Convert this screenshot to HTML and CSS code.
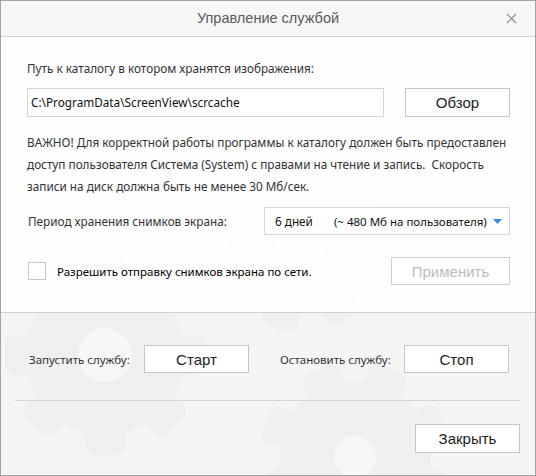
FILE: index.html
```html
<!DOCTYPE html>
<html lang="ru">
<head>
<meta charset="utf-8">
<title>Управление службой</title>
<link rel="stylesheet" href="styles.css">
</head>
<body>
<div class="window">
  <div class="titlebar">
    <span class="title">Управление службой</span>
    <span class="close" aria-label="Закрыть">
      <svg width="11" height="11" viewBox="0 0 11 11"><path d="M1 1L10 10M10 1L1 10" stroke="#8a8a8a" stroke-width="1.2" fill="none"/></svg>
    </span>
  </div>
  <div class="body">
    <svg class="gears" width="534" height="438" viewBox="0 0 534 438" aria-hidden="true">
      <defs>
        <g id="gear">
          <circle r="80"/>
          <rect x="-20" y="-100" width="40" height="200" rx="9"/>
          <rect x="-20" y="-100" width="40" height="200" rx="9" transform="rotate(45)"/>
          <rect x="-20" y="-100" width="40" height="200" rx="9" transform="rotate(90)"/>
          <rect x="-20" y="-100" width="40" height="200" rx="9" transform="rotate(135)"/>
        </g>
      </defs>
      <g class="gear-fill">
        <use href="#gear" transform="translate(104 318)"/>
        <use href="#gear" transform="translate(354 420) rotate(22) scale(0.95)"/>
        <use href="#gear" transform="translate(300 205) rotate(15) scale(0.9)"/>
      </g>
      <g class="gear-hole">
        <circle cx="104" cy="318" r="27"/>
        <circle cx="354" cy="420" r="21"/>
        <circle cx="300" cy="205" r="25"/>
      </g>
    </svg>
    <section class="upper">
      <div class="label">Путь к каталогу в котором хранятся изображения:</div>
      <div class="path-row">
        <div class="input">C:\ProgramData\ScreenView\scrcache</div>
        <button class="btn btn-browse">Обзор</button>
      </div>
      <p class="note">ВАЖНО! Для корректной работы программы к каталогу должен быть предоставлен доступ пользователя Система (System) с правами на чтение и запись.&nbsp; Скорость записи на диск должна быть не менее 30 Мб/сек.</p>
      <div class="period-row">
        <span class="period-label">Период хранения снимков экрана:</span>
        <div class="select">
          <span class="sel-days">6 дней</span>
          <span class="sel-size">(~ 480 Мб на пользователя)</span>
          <svg class="sel-arrow" width="9" height="5" viewBox="0 0 9 5"><path d="M0 0H9L4.5 5Z" fill="#2f8fdc"/></svg>
        </div>
      </div>
      <div class="check-row">
        <span class="checkbox"></span>
        <span class="check-label">Разрешить отправку снимков экрана по сети.</span>
        <button class="btn btn-apply" disabled>Применить</button>
      </div>
    </section>
    <section class="lower">
      <div class="service-row">
        <span class="svc-label">Запустить службу:</span>
        <button class="btn btn-svc">Старт</button>
        <span class="svc-label svc-stop">Остановить службу:</span>
        <button class="btn btn-svc">Стоп</button>
      </div>
      <div class="divider"></div>
      <div class="close-row">
        <button class="btn btn-close">Закрыть</button>
      </div>
    </section>
  </div>
</div>
</body>
</html>
```
FILE: styles.css
```css
* { box-sizing: border-box; }
html, body { margin: 0; padding: 0; }
body {
  width: 536px;
  height: 476px;
  background: #ffffff;
  font-family: "Noto Sans", "Open Sans", sans-serif;
  font-size: 11.75px;
  color: #333333;
}
.window {
  width: 536px;
  height: 476px;
  border: 1px solid #a3a3a3;
  display: flex;
  flex-direction: column;
  background: #f5f5f5;
}
.titlebar {
  height: 36px;
  flex: none;
  background: #f7f7f7;
  border-bottom: 1px solid #d3d3d3;
  display: flex;
  align-items: center;
  justify-content: center;
  position: relative;
}
.title {
  font-family: "Liberation Sans", Arial, sans-serif;
  font-size: 14.5px;
  color: #5a5a5a;
  margin-top: -1px;
}
.close {
  position: absolute;
  right: 18px;
  top: 12px;
  width: 11px;
  height: 11px;
  display: block;
  line-height: 0;
}
.body {
  flex: 1;
  display: flex;
  flex-direction: column;
  position: relative;
  background: #f5f5f5;
}
.gears {
  position: absolute;
  left: 0;
  top: 0;
  pointer-events: none;
}
.gear-fill { fill: #efefef; }
.gear-hole { fill: #f7f7f7; }
.upper {
  position: relative;
  background: rgba(255, 255, 255, 0.86);
  height: 276px;
  flex: none;
  border-bottom: 1px solid #cfcfcf;
  padding: 21px 25px 0 26px;
}
.label {
  height: 20px;
  line-height: 20px;
}
.path-row {
  margin-top: 10px;
  display: flex;
  justify-content: space-between;
}
.input {
  width: 357px;
  height: 29px;
  border: 1px solid #d5d5d5;
  background: #fff;
  line-height: 27px;
  padding-left: 3px;
  color: #111;
}
.btn {
  font-family: "Liberation Sans", Arial, sans-serif;
  font-size: 15px;
  color: #222;
  background: #ffffff;
  border: 1px solid #c6c6c6;
  padding: 0;
  margin: 0;
  width: 105px;
  height: 29px;
}
.note {
  margin: 14px 0 0 0;
  line-height: 22px;
  padding-right: 0;
}
.period-row {
  margin-top: 10px;
  display: flex;
  align-items: center;
  justify-content: space-between;
}
.period-label { padding-left: 1px; }
.select {
  width: 246px;
  height: 28px;
  border: 1px solid #d8d8d8;
  background: #fff;
  display: flex;
  align-items: center;
  padding-left: 10px;
  color: #111;
  white-space: nowrap;
}
.sel-size { margin-left: 21px; font-size: 11.5px; }
.sel-arrow { margin-left: 6px; }
.check-row {
  margin-top: 22px;
  display: flex;
  align-items: center;
}
.checkbox {
  width: 18px;
  height: 18px;
  border: 1px solid #c8c8c8;
  background: #fff;
  margin-left: 1px;
}
.check-label {
  margin-left: 11px;
  color: #000;
  font-size: 11.5px;
  flex: 1;
}
.btn-apply {
  width: 119px;
  height: 28px;
  color: #bdbdbd;
  border-color: #d0d0d0;
}
.lower {
  position: relative;
  flex: 1;
  padding: 32px 15px 0 14px;
}
.service-row {
  display: flex;
  align-items: center;
  height: 28px;
}
.svc-label {
  font-size: 11.5px;
  color: #333;
  margin-left: 14px;
  width: 115px;
  white-space: nowrap;
}
.svc-stop {
  margin-left: 31px;
  width: 124px;
}
.btn-svc { height: 28px; }
.divider {
  margin-top: 27px;
  height: 1px;
  background: #d5d5d5;
}
.close-row {
  margin-top: 23px;
  display: flex;
  justify-content: flex-end;
}
.btn-close { width: 105px; height: 29px; }
```
